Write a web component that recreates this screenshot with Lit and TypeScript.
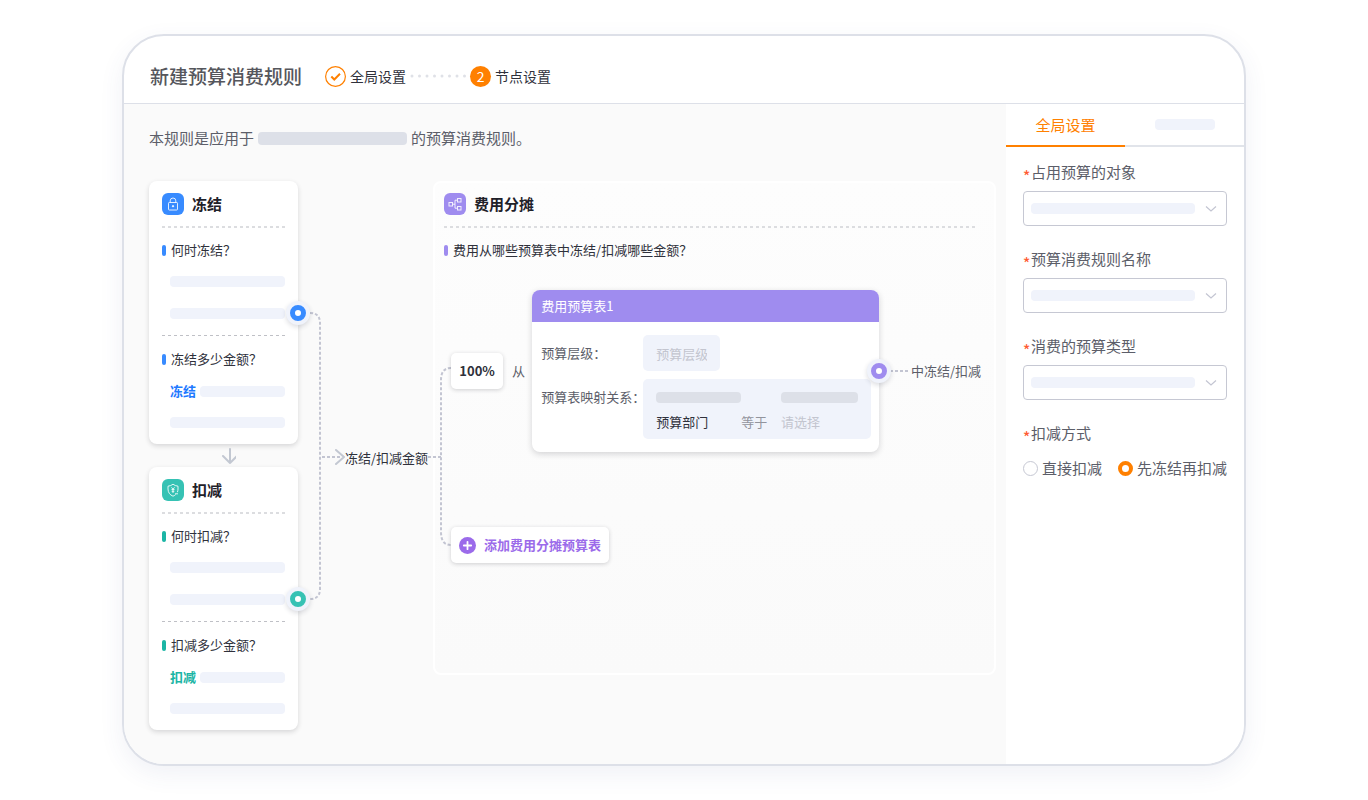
import { LitElement, html, svg, css } from "lit";
import { customElement, property, state } from "lit/decorators.js";

const lockIcon = svg`
  <rect x="6.500" y="9.500" width="9" height="7.500" rx="0.8"></rect>
  <path d="M8.200 9.500V7.800a2.800 2.800 0 0 1 5.600 0v1.700"></path>
  <circle cx="11" cy="13.200" r="0.7" fill="#fff"></circle>`;

const shieldIcon = svg`
  <path d="M15.400 13.200c.4-1 .6-2 .6-3.200V7.200C14 7 12.400 6.300 11 5.200 9.600 6.300 8 7 6 7.200V10c0 3.600 2 6 5 7.200 1-.4 1.900-.9 2.600-1.600"></path>
  <path d="M9.500 8.300l1.500 2 1.500-2M11 10.300v3.700M9.500 10.600h3M9.700 12.300h2.600"></path>
  <path d="M13 14.800h3"></path>`;

const shareIcon = svg`
  <rect x="5" y="9.500" width="3.500" height="3.500"></rect>
  <rect x="13.500" y="5.500" width="3.500" height="3.500"></rect>
  <rect x="13.500" y="13.500" width="3.500" height="3.500"></rect>
  <path d="M13.500 7.200H11v8h2.500M8.500 11.200H11"></path>`;

const icons = { lock: lockIcon, shield: shieldIcon, share: shareIcon };

const shared = css`
  *,
  *::before {
    box-sizing: border-box;
  }
  h2 {
    margin: 0;
    font-size: 15px;
    line-height: 22px;
    font-weight: 700;
    color: #1f2129;
  }
  .head {
    display: flex;
    align-items: center;
    gap: 8px;
  }
  .badge {
    width: 22px;
    height: 22px;
    border-radius: 6px;
    background: var(--tone);
    fill: none;
    stroke: #fff;
    stroke-width: 1;
    stroke-opacity: 0.85;
  }
  .rule {
    display: block;
    width: 100%;
    height: 2px;
    background: repeating-linear-gradient(90deg, #dcdde0 0 3px, transparent 3px 6px);
  }
  .rule.thin {
    height: 1px;
    background: repeating-linear-gradient(90deg, #bfc0c6 0 3px, transparent 3px 6px);
  }
  .question {
    display: flex;
    align-items: center;
    gap: 5px;
    margin: 0;
    font-size: 13px;
    line-height: 20px;
    color: #2f313b;
    white-space: nowrap;
  }
  .question::before {
    content: "";
    width: 4px;
    height: 11px;
    border-radius: 2px;
    background: var(--tick);
  }
  .port {
    position: absolute;
    width: 24px;
    height: 24px;
    border-radius: 50%;
    background: #f0f3fb;
    box-shadow: 0 2px 5px rgba(30, 35, 60, 0.16);
    display: grid;
    place-items: center;
  }
  .port::before {
    content: "";
    width: 16px;
    height: 16px;
    border-radius: 50%;
    border: 5px solid var(--tone);
    background: #fff;
  }
  .skeleton {
    display: block;
    height: 11px;
    border-radius: 4px;
    background: #f0f3fb;
  }
`;

@customElement("rule-card")
export class RuleCard extends LitElement {
  @property() action = "";
  @property() icon: "lock" | "shield" = "lock";

  static styles = [
    shared,
    css`
      :host {
        display: block;
      }
      .card {
        position: relative;
        padding: 12px 13px 16px;
        border-radius: 8px;
        background: #fff;
        box-shadow: 0 2px 5px rgba(30, 30, 40, 0.16);
      }
      .rule {
        margin: 11px 0 12px;
      }
      .rule.thin {
        margin: 16px 0 13px;
      }
      .lines {
        display: grid;
        gap: 21px;
        padding: 16px 0 0 8px;
      }
      .amount {
        display: flex;
        align-items: center;
        gap: 4px;
        padding: 12px 0 0 8px;
        font-size: 13px;
        line-height: 20px;
        color: var(--strong);
      }
      .amount .skeleton {
        flex: 1;
      }
      .port {
        right: -12px;
        top: 120px;
      }
    `,
  ];

  render() {
    return html`
      <section class="card">
        <div class="head">
          <svg class="badge" viewBox="0 0 22 22" aria-hidden="true">${icons[this.icon]}</svg>
          <h2>${this.action}</h2>
        </div>
        <span class="rule"></span>
        <p class="question">何时${this.action}？</p>
        <div class="lines">
          <span class="skeleton"></span>
          <span class="skeleton"></span>
        </div>
        <span class="rule thin"></span>
        <p class="question">${this.action}多少金额？</p>
        <div class="amount"><b>${this.action}</b><span class="skeleton"></span></div>
        <div class="lines"><span class="skeleton"></span></div>
        <span class="port"></span>
      </section>
    `;
  }
}

@customElement("budget-split")
export class BudgetSplit extends LitElement {
  static styles = [
    shared,
    css`
      :host {
        display: block;
        color: #5c5e69;
        font-size: 13px;
        line-height: 20px;
      }
      .panel {
        min-height: 494px;
        border: 2px solid #fff;
        border-radius: 8px;
        background: linear-gradient(#fdfdfd, #fafafa);
        padding: 10px 0;
      }
      .intro {
        padding: 0 16px 0 9px;
      }
      .rule {
        margin: 11px 0 12px;
      }
      .body {
        display: flex;
        padding: 30px 13px 0 0;
      }
      .branch {
        flex: none;
        width: 16px;
        height: 274px;
        overflow: visible;
      }
      .wire {
        fill: none;
        stroke: #c3c5d2;
        stroke-width: 2;
        stroke-dasharray: 3 2;
      }
      .rows {
        flex: 1;
        min-width: 0;
      }
      .row {
        display: flex;
        align-items: center;
        white-space: nowrap;
      }
      .share {
        width: 52px;
        padding: 8px 0;
        margin-right: 9px;
        border-radius: 5px;
        background: #fff;
        box-shadow: 0 1px 4px rgba(30, 30, 40, 0.2);
        text-align: center;
        font-weight: 700;
        color: #2f313b;
      }
      .table {
        position: relative;
        flex: 1;
        margin-left: 7px;
        border-radius: 8px;
        background: #fff;
        box-shadow: 0 2px 6px rgba(30, 30, 40, 0.18);
      }
      h3 {
        margin: 0;
        padding: 6px 9px;
        border-radius: 8px 8px 0 0;
        background: #9f8cef;
        color: #fff;
        font-size: 13px;
        font-weight: 400;
        line-height: 20px;
      }
      .fields {
        display: grid;
        grid-template-columns: 102px 1fr;
        row-gap: 8px;
        padding: 13px 8px 13px 9px;
      }
      .fields > label,
      .fields > .name {
        padding-top: 8px;
      }
      input,
      select {
        font: inherit;
        color: #c3c5cf;
        border: 0;
        appearance: none;
        background: transparent;
        padding: 0;
        margin: 0;
        outline-offset: 2px;
      }
      input::placeholder {
        color: #c3c5cf;
        opacity: 1;
      }
      .level {
        width: 77px;
        height: 36px;
        padding: 0 13px;
        border-radius: 5px;
        background: #f0f3fb;
      }
      .mapping {
        display: grid;
        grid-template-columns: 85px 1fr 77px;
        row-gap: 9px;
        padding: 13px 13px 7px;
        border-radius: 5px;
        background: #f0f3fb;
      }
      .mapping .skeleton {
        background: #dde0e8;
      }
      .mapping .skeleton + .skeleton {
        grid-column: 3;
      }
      .mapping .dept {
        color: #2f313b;
      }
      .mapping .equals {
        color: #92949d;
      }
      .mapping select {
        height: 20px;
        width: 100%;
      }
      .port {
        right: -12px;
        top: 69px;
      }
      .tail {
        flex: none;
        width: 18px;
        height: 2px;
        margin: 0 3px 0 11px;
      }
      .add {
        display: flex;
        align-items: center;
        gap: 8px;
        margin: 75px 0 0;
        padding: 8px;
        border: 0;
        border-radius: 5px;
        background: #fff;
        box-shadow: 0 1px 4px rgba(30, 30, 40, 0.2);
        color: #9b6bea;
        font: inherit;
        font-weight: 700;
        cursor: pointer;
      }
      .add svg {
        width: 17px;
        height: 17px;
      }
    `,
  ];

  render() {
    return html`
      <section class="panel">
        <div class="intro">
          <div class="head">
            <svg class="badge" viewBox="0 0 22 22" aria-hidden="true">${icons.share}</svg>
            <h2>费用分摊</h2>
          </div>
          <span class="rule"></span>
          <p class="question">费用从哪些预算表中冻结/扣减哪些金额？</p>
        </div>
        <div class="body">
          <svg class="branch" viewBox="0 0 16 274" aria-hidden="true">
            <path class="wire" d="M16 78q-10 0-10 12V242q0 13 10 13"></path>
            <path class="wire" d="M-7 167H6"></path>
          </svg>
          <div class="rows">
            <div class="row">
              <span class="share">100%</span>
              <span>从</span>
              <div class="table">
                <h3>费用预算表1</h3>
                <div class="fields">
                  <label for="level">预算层级：</label>
                  <input class="level" id="level" placeholder="预算层级" />
                  <span class="name">预算表映射关系：</span>
                  <div class="mapping">
                    <span class="skeleton"></span>
                    <span class="skeleton"></span>
                    <label class="dept" for="dept">预算部门</label>
                    <span class="equals">等于</span>
                    <select id="dept"><option>请选择</option></select>
                  </div>
                </div>
                <span class="port"></span>
              </div>
              <svg class="tail" aria-hidden="true"><path class="wire" d="M0 1H18"></path></svg>
              <span>中冻结/扣减</span>
            </div>
            <button class="add" type="button">
              <svg viewBox="0 0 17 17" aria-hidden="true">
                <circle cx="8.500" cy="8.500" r="8.500" fill="#9b6bea"></circle>
                <path d="M8.500 4.800v7.400M4.800 8.500h7.400" stroke="#fff" stroke-width="1.800" stroke-linecap="round"></path>
              </svg>
              添加费用分摊预算表
            </button>
          </div>
        </div>
      </section>
    `;
  }
}

@customElement("settings-panel")
export class SettingsPanel extends LitElement {
  @state() mode = "freeze";

  static styles = [
    shared,
    css`
      :host {
        display: block;
        background: #fff;
        color: #5c5e69;
        font-size: 15px;
        line-height: 24px;
      }
      .tabs {
        display: grid;
        grid-template-columns: 1fr 1fr;
      }
      .tab {
        display: grid;
        place-items: center;
        height: 43px;
        padding: 0;
        border: 0;
        border-bottom: 2px solid #e1e4ea;
        background: none;
        color: #ff8000;
        font: inherit;
      }
      .tab.active {
        border-bottom-color: #ff8000;
      }
      .tab .skeleton {
        width: 60px;
      }
      form {
        padding: 13px 17px;
      }
      .field {
        margin-bottom: 21px;
      }
      .field label,
      legend {
        display: block;
        padding: 0;
        margin-bottom: 7px;
      }
      .star {
        display: inline-block;
        width: 8px;
        height: 24px;
        line-height: 32px;
        vertical-align: top;
        color: #ff5c33;
        font-weight: 500;
      }
      .box {
        position: relative;
      }
      select {
        display: block;
        width: 100%;
        height: 35px;
        padding: 0 40px 0 8px;
        border: 1px solid #c6c8d3;
        border-radius: 4px;
        appearance: none;
        background: #fff;
        font: inherit;
        color: inherit;
      }
      .box .skeleton {
        position: absolute;
        left: 8px;
        right: 32px;
        top: 12px;
        pointer-events: none;
      }
      .box svg {
        position: absolute;
        right: 10px;
        top: 14px;
        width: 12px;
        height: 8px;
        fill: none;
        stroke: #c3c5d2;
        stroke-width: 1.2;
        pointer-events: none;
      }
      fieldset {
        margin: 0;
        padding: 0;
        border: 0;
      }
      .options {
        display: flex;
        justify-content: space-between;
        padding-top: 4px;
        white-space: nowrap;
      }
      .options label {
        display: flex;
        align-items: center;
        gap: 4px;
      }
      input {
        appearance: none;
        width: 15px;
        height: 15px;
        margin: 0;
        border: 1px solid #c6c8d3;
        border-radius: 50%;
        background: #fff;
      }
      input:checked {
        border: 4px solid #ff8000;
      }
    `,
  ];

  render() {
    const fields = ["占用预算的对象", "预算消费规则名称", "消费的预算类型"];
    return html`
      <div class="tabs" role="tablist">
        <button class="tab active" role="tab" aria-selected="true">全局设置</button>
        <button class="tab" role="tab" aria-selected="false"><span class="skeleton"></span></button>
      </div>
      <form>
        ${fields.map(
          (name, i) => html`
            <div class="field">
              <label for="field-${i}"><span class="star">*</span>${name}</label>
              <div class="box">
                <select id="field-${i}"><option></option></select>
                <span class="skeleton"></span>
                <svg viewBox="0 0 12 8" aria-hidden="true"><path d="M1 1.500l5 4.500 5-4.500"></path></svg>
              </div>
            </div>
          `,
        )}
        <fieldset>
          <legend><span class="star">*</span>扣减方式</legend>
          <div class="options">
            <label>
              <input type="radio" name="mode" .checked=${this.mode === "direct"} @change=${() => (this.mode = "direct")} />
              直接扣减
            </label>
            <label>
              <input type="radio" name="mode" .checked=${this.mode === "freeze"} @change=${() => (this.mode = "freeze")} />
              先冻结再扣减
            </label>
          </div>
        </fieldset>
      </form>
    `;
  }
}

@customElement("app-root")
export class AppRoot extends LitElement {
  static styles = [
    shared,
    css`
      :host {
        display: block;
        padding: 34px 122px;
        background: #fff;
        font-family: "Noto Sans CJK SC", "Noto Sans", sans-serif;
      }
      .frame {
        border: 2px solid #dde0e8;
        border-radius: 42px;
        overflow: hidden;
        background: #fff;
        box-shadow: 0 8px 24px rgba(60, 80, 140, 0.08);
      }
      header {
        display: flex;
        align-items: center;
        gap: 23px;
        padding: 26px 26px 13px;
        border-bottom: 1px solid #dde0e8;
      }
      h1 {
        margin: 0;
        font-size: 19px;
        line-height: 28px;
        font-weight: 500;
        color: #55565c;
      }
      ol {
        display: flex;
        align-items: center;
        gap: 4px;
        margin: 0;
        padding: 0;
        list-style: none;
        font-size: 14px;
        line-height: 22px;
        color: #2f313b;
      }
      li {
        display: flex;
        align-items: center;
        gap: 4px;
      }
      .mark {
        width: 21px;
        height: 21px;
      }
      .number {
        width: 21px;
        border-radius: 50%;
        background: #ff8000;
        color: #fff;
        line-height: 21px;
        text-align: center;
      }
      .dots {
        width: 56px;
        height: 4px;
        stroke: #dfe1e7;
        stroke-width: 3;
        stroke-linecap: round;
        stroke-dasharray: 0 7.500;
      }
      .content {
        display: flex;
      }
      .canvas {
        flex: 1;
        min-width: 0;
        padding: 22px 10px 34px 25px;
        background: #fafafa;
      }
      settings-panel {
        flex: none;
        width: 238px;
      }
      .scope {
        display: flex;
        align-items: center;
        gap: 4px;
        margin: 0 0 31px;
        font-size: 15px;
        line-height: 24px;
        color: #5c5e69;
      }
      .scope .skeleton {
        width: 149px;
        height: 13px;
        background: #dde0e8;
      }
      .flow {
        display: flex;
      }
      .cards {
        flex: none;
        width: 149px;
      }
      .down {
        display: block;
        width: 24px;
        height: 23px;
        margin: 0 auto;
        box-sizing: content-box;
      }
      .arrow {
        fill: none;
        stroke: #c3c8d2;
        stroke-width: 2;
        stroke-linecap: round;
        stroke-linejoin: round;
      }
      .merge {
        flex: none;
        width: 47px;
        height: 549px;
      }
      .wire {
        fill: none;
        stroke: #c3c5d2;
        stroke-width: 2;
        stroke-dasharray: 3 2;
      }
      .total {
        align-self: center;
        margin: 4px 5px 0 0;
        font-size: 13px;
        line-height: 20px;
        color: #2f313b;
        white-space: nowrap;
      }
      .freeze {
        --tone: #388bff;
        --tick: #388bff;
        --strong: #1f7aff;
      }
      .deduct {
        --tone: #36c2b4;
        --tick: #1bb5a5;
        --strong: #1bb5a5;
      }
      budget-split {
        --tone: #9f8cef;
        --tick: #9f8cef;
        flex: 1;
        min-width: 0;
      }
    `,
  ];

  render() {
    return html`
      <main class="frame">
        <header>
          <h1>新建预算消费规则</h1>
          <ol>
            <li>
              <svg class="mark" viewBox="0 0 21 21" fill="none" stroke="#ff8000" aria-hidden="true">
                <circle cx="10.500" cy="10.500" r="9.900" stroke-width="1.200"></circle>
                <path d="M6.300 10.500l3 3 5.700-5.700" stroke-width="2"></path>
              </svg>
              全局设置
            </li>
            <svg class="dots" viewBox="0 0 56 4" aria-hidden="true"><path d="M2 2H55"></path></svg>
            <li aria-current="step"><span class="number">2</span>节点设置</li>
          </ol>
        </header>
        <div class="content">
          <div class="canvas">
            <p class="scope">本规则是应用于<span class="skeleton"></span>的预算消费规则。</p>
            <div class="flow">
              <div class="cards">
                <rule-card class="freeze" action="冻结" icon="lock"></rule-card>
                <svg class="down arrow" viewBox="0 0 24 23" aria-hidden="true">
                  <path d="M18 5V19M11 12l7 7 7-7"></path>
                </svg>
                <rule-card class="deduct" action="扣减" icon="shield"></rule-card>
              </div>
              <svg class="merge" viewBox="0 0 47 549" aria-hidden="true">
                <path class="wire" d="M12 132q10 0 10 10V408q0 10-10 10"></path>
                <path class="wire" d="M24 276H42"></path>
                <path class="arrow" d="M38 269l8 7-8 7"></path>
              </svg>
              <span class="total">冻结/扣减金额</span>
              <budget-split></budget-split>
            </div>
          </div>
          <settings-panel></settings-panel>
        </div>
      </main>
    `;
  }
}
